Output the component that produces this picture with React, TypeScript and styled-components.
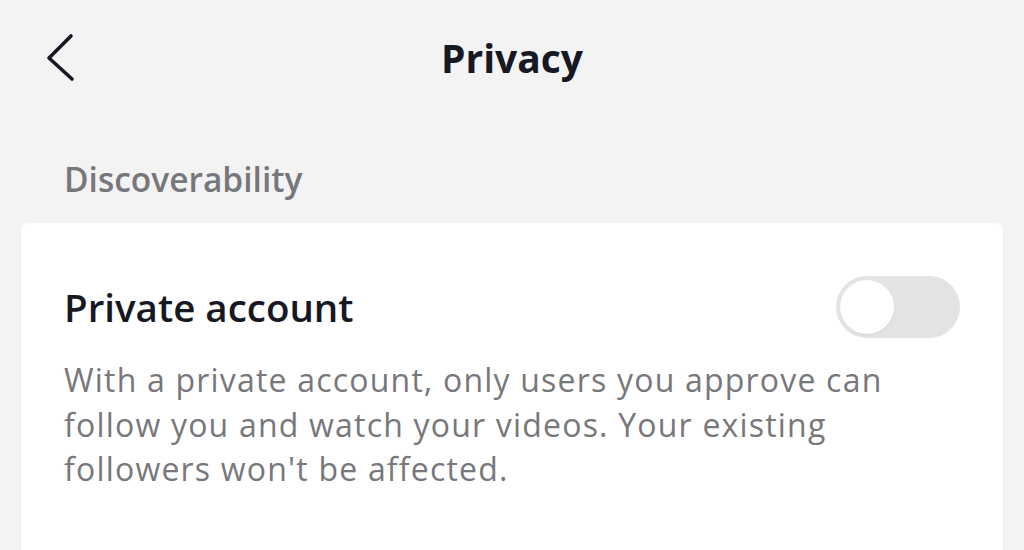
import React from "react";
import styled, { createGlobalStyle } from "styled-components";

const GlobalStyle = createGlobalStyle`
  html, body {
    margin: 0;
    padding: 0;
    background: #f3f3f4;
  }
  body {
    font-family: "Open Sans", Lato, "Liberation Sans", sans-serif;
    -webkit-font-smoothing: antialiased;
  }
`;

const Page = styled.div`
  width: 1024px;
  height: 550px;
  overflow: hidden;
  background: #f3f3f4;
`;

const Header = styled.header`
  height: 115px;
  display: grid;
  grid-template-columns: 1fr auto 1fr;
  align-items: center;
`;

const BackButton = styled.button`
  justify-self: start;
  margin-left: 45px;
  padding: 0;
  border: none;
  background: none;
  width: 30px;
  height: 50px;
  display: flex;
`;

const Title = styled.h1`
  margin: 0;
  font-size: 39px;
  line-height: 46px;
  font-weight: 700;
  color: #161823;
`;

const SectionLabel = styled.h2`
  margin: 44px 0 0 64px;
  font-size: 33.5px;
  line-height: 40px;
  font-weight: 600;
  color: #76777c;
`;

const Card = styled.section`
  margin: 24px 21px 0;
  background: #ffffff;
  border-radius: 8px;
  padding: 53px 43px 120px;
`;

const Row = styled.div`
  display: flex;
  align-items: center;
  justify-content: space-between;
`;

const RowTitle = styled.span`
  font-size: 38.5px;
  line-height: 40px;
  font-weight: 600;
  color: #161823;
`;

const Toggle = styled.button<{ $on: boolean }>`
  width: 124px;
  height: 62px;
  border: none;
  padding: 4px;
  border-radius: 31px;
  background: ${(p) => (p.$on ? "#20d5ec" : "#e3e3e4")};
  display: flex;
  justify-content: ${(p) => (p.$on ? "flex-end" : "flex-start")};
  align-items: center;
`;

const Knob = styled.span`
  width: 54px;
  height: 54px;
  border-radius: 50%;
  background: #ffffff;
  box-shadow: 0 1px 2px rgba(0, 0, 0, 0.06);
`;

const Description = styled.p`
  margin: 20px 0 0;
  font-size: 32px;
  line-height: 44.5px;
  letter-spacing: 1.2px;
  font-weight: 400;
  color: #77777c;
`;

export default function App() {
  return (
    <Page>
      <GlobalStyle />
      <Header>
        <BackButton aria-label="Back">
          <svg width="30" height="50" viewBox="0 0 30 50" fill="none">
            <path
              d="M26 3 L4 25 L27 46"
              stroke="#161823"
              strokeWidth="3.6"
              strokeLinecap="round"
              strokeLinejoin="round"
            />
          </svg>
        </BackButton>
        <Title>Privacy</Title>
        <span />
      </Header>
      <SectionLabel>Discoverability</SectionLabel>
      <Card>
        <Row>
          <RowTitle>Private account</RowTitle>
          <Toggle $on={false} aria-label="Private account">
            <Knob />
          </Toggle>
        </Row>
        <Description>
          With a private account, only users you approve can follow you and
          watch your videos. Your existing followers won't be affected.
        </Description>
      </Card>
    </Page>
  );
}
